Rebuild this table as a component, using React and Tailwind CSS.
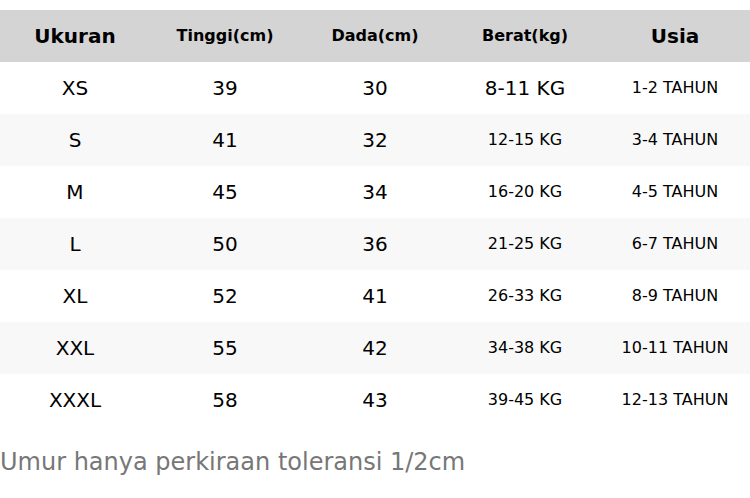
export default function App() {
  const rows = [
    ["XS", "39", "30", "8-11 KG", "1-2 TAHUN", true],
    ["S", "41", "32", "12-15 KG", "3-4 TAHUN"],
    ["M", "45", "34", "16-20 KG", "4-5 TAHUN"],
    ["L", "50", "36", "21-25 KG", "6-7 TAHUN"],
    ["XL", "52", "41", "26-33 KG", "8-9 TAHUN"],
    ["XXL", "55", "42", "34-38 KG", "10-11 TAHUN"],
    ["XXXL", "58", "43", "39-45 KG", "12-13 TAHUN"],
  ];
  return (
    <div className="w-[750px] h-[498px] bg-white text-black" style={{ fontFamily: '"DejaVu Sans", sans-serif' }}>
      <div className="pt-[10px]">
        <div className="grid grid-cols-5 h-[52px] bg-[#d4d4d4] items-center text-center font-bold">
          <div className="text-[20px]">Ukuran</div>
          <div className="text-[16px]">Tinggi(cm)</div>
          <div className="text-[16px]">Dada(cm)</div>
          <div className="text-[16px]">Berat(kg)</div>
          <div className="text-[20px]">Usia</div>
        </div>
        {rows.map((r, i) => (
          <div key={i} className={`grid grid-cols-5 h-[52px] items-center text-center ${i % 2 === 1 ? "bg-[#f8f8f8]" : "bg-white"}`}>
            <div className="text-[20px]">{r[0]}</div>
            <div className="text-[20px]">{r[1]}</div>
            <div className="text-[20px]">{r[2]}</div>
            <div className={r[5] ? "text-[20px]" : "text-[16px]"}>{r[3]}</div>
            <div className="text-[16px]">{r[4]}</div>
          </div>
        ))}
        <div className="mt-[21px] text-[24px] text-[#777777] leading-[30px]">Umur hanya perkiraan toleransi 1/2cm</div>
      </div>
    </div>
  );
}
